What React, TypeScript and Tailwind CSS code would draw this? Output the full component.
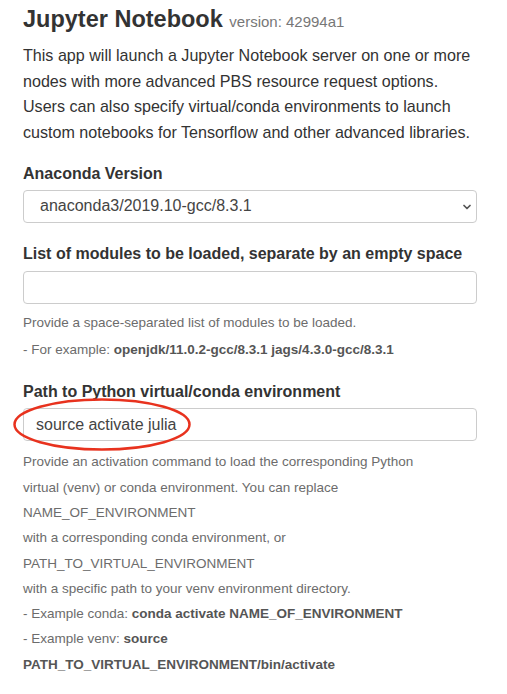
import { ChevronDown } from "lucide-react";

const help = "text-[13.5px] leading-[25.3px] text-[#6c6c6c]";

export default function App() {
  return (
    <div
      className="w-[507px] min-h-[694px] bg-white pl-[23px] pr-[30px] pt-[5px] text-[#222]"
      style={{ fontFamily: '"Liberation Sans", Arial, sans-serif' }}
    >
      <h3 className="text-[23.5px] font-bold leading-[29px] text-[#333]">
        Jupyter Notebook{" "}
        <span className="text-[15px] font-normal text-[#777]">version: 42994a1</span>
      </h3>

      <p className="mt-[7px] text-[16.1px] leading-[25.7px] text-[#333]">
        This app will launch a Jupyter Notebook server on one or more nodes with more
        advanced PBS resource request options. Users can also specify virtual/conda
        environments to launch custom notebooks for Tensorflow and other advanced
        libraries.
      </p>

      <div className="mt-[16px]">
        <label className="block text-[16px] font-bold leading-[24px] text-[#333]">
          Anaconda Version
        </label>
        <div className="relative mt-[4px] flex h-[33px] items-center rounded-[4px] border border-[#ccc] pl-[16px] text-[16px] text-[#444]">
          anaconda3/2019.10-gcc/8.3.1
          <ChevronDown className="absolute right-[3px] top-[10px] h-[12px] w-[12px] text-[#555]" strokeWidth={3.5} />
        </div>
      </div>

      <div className="mt-[19px]">
        <label className="block text-[16px] font-bold leading-[24px] text-[#333]">
          List of modules to be loaded, separate by an empty space
        </label>
        <div className="mt-[5px] h-[33px] rounded-[4px] border border-[#ccc]" />
        <div className={`mt-[6px] ${help}`}>
          <p>Provide a space-separated list of modules to be loaded.</p>
          <p className="mt-[2px]">
            - For example: <b className="text-[#555]">openjdk/11.0.2-gcc/8.3.1 jags/4.3.0-gcc/8.3.1</b>
          </p>
        </div>
      </div>

      <div className="mt-[18px]">
        <label className="block text-[16px] font-bold leading-[24px] text-[#333]">
          Path to Python virtual/conda environment
        </label>
        <div className="relative mt-[4px] flex h-[33px] items-center rounded-[4px] border border-[#ccc] pl-[12px] text-[16px] text-[#444]">
          source activate julia
          <svg
            className="pointer-events-none absolute left-[-11px] top-[-12px]"
            width="182"
            height="56"
            viewBox="0 0 182 56"
          >
            <ellipse cx="89" cy="27.5" rx="87.5" ry="25" fill="none" stroke="#e8321e" strokeWidth="2.5" />
          </svg>
        </div>
        <div className={`mt-[8px] ${help}`}>
          <p>Provide an activation command to load the corresponding Python</p>
          <p>virtual (venv) or conda environment. You can replace</p>
          <p>NAME_OF_ENVIRONMENT</p>
          <p>with a corresponding conda environment, or</p>
          <p>PATH_TO_VIRTUAL_ENVIRONMENT</p>
          <p>with a specific path to your venv environment directory.</p>
          <p>
            - Example conda: <b className="text-[#555]">conda activate NAME_OF_ENVIRONMENT</b>
          </p>
          <p>
            - Example venv: <b className="text-[#555]">source</b>
          </p>
          <p>
            <b className="text-[#555]">PATH_TO_VIRTUAL_ENVIRONMENT/bin/activate</b>
          </p>
        </div>
      </div>
    </div>
  );
}
